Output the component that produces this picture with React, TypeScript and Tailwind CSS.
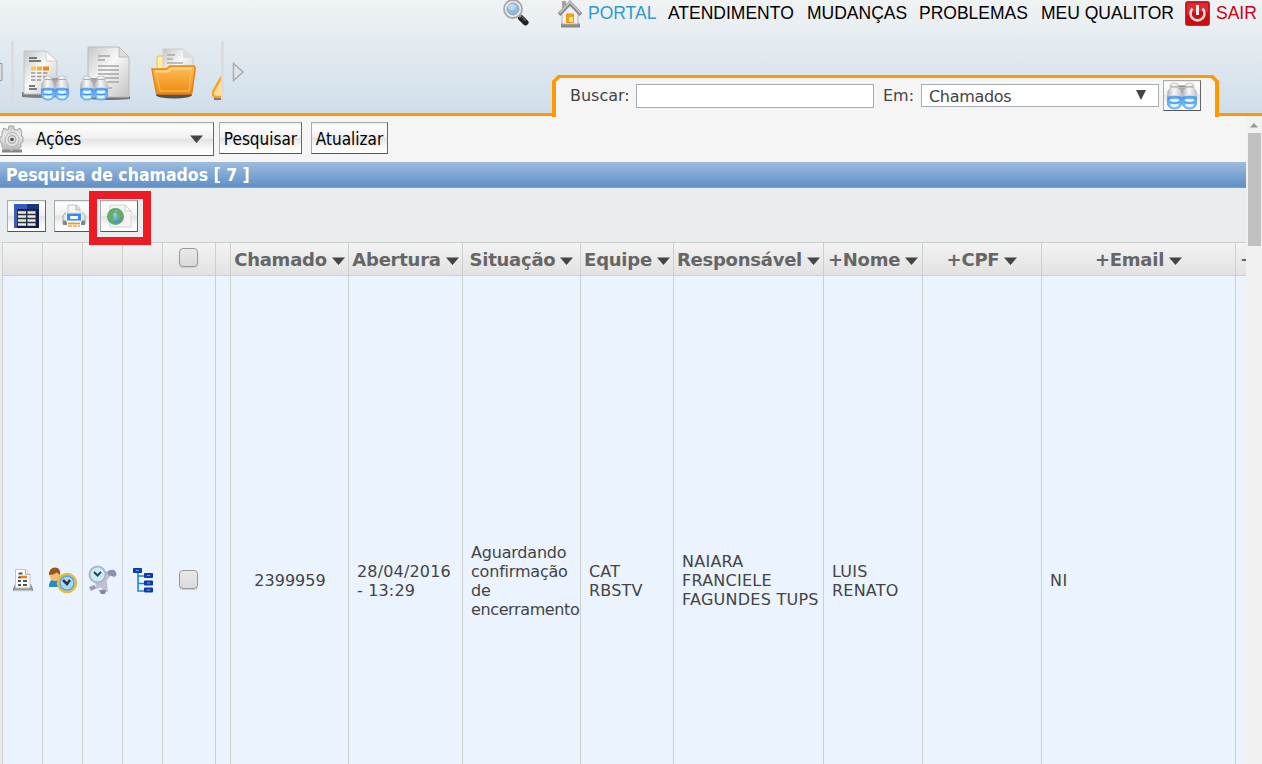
import React from 'react';

const VERDANA = "font-['Verdana','DejaVu_Sans',sans-serif]";
const TAHOMA = "font-['Tahoma','DejaVu_Sans_Condensed','DejaVu_Sans',sans-serif]";
const BUTTON =
  'border border-t-[#aaa] border-l-[#aaa] border-r-[#666] border-b-[#555] bg-[linear-gradient(#cdeefa_0,#fff_2px,#f0f0f0_48%,#e2e2e2_50%,#fafafa_80%,#fff_100%)]';

function Gradients() {
  return (
    <svg width="0" height="0" className="absolute">
      <defs>
        <linearGradient id="paper" x1="0" y1="0" x2="1" y2="1">
          <stop offset="0" stopColor="#c6c6c6" />
          <stop offset=".45" stopColor="#f8f8f8" />
          <stop offset="1" stopColor="#c2c2c2" />
        </linearGradient>
        <linearGradient id="barrel" x1="0" y1="0" x2="1" y2="0">
          <stop offset="0" stopColor="#b4b4b4" />
          <stop offset=".45" stopColor="#f8f8f8" />
          <stop offset="1" stopColor="#c4c4c4" />
        </linearGradient>
        <radialGradient id="lens" cx=".5" cy=".6" r=".6">
          <stop offset="0" stopColor="#d8f1ff" />
          <stop offset=".5" stopColor="#8ecbff" />
          <stop offset="1" stopColor="#3f94f8" />
        </radialGradient>
        <linearGradient id="folder" x1="0" y1="0" x2="0" y2="1">
          <stop offset="0" stopColor="#ffbd55" />
          <stop offset="1" stopColor="#ee8a12" />
        </linearGradient>
        <linearGradient id="metal" x1="0" y1="0" x2="0" y2="1">
          <stop offset="0" stopColor="#c9c9c9" />
          <stop offset=".4" stopColor="#ebebeb" />
          <stop offset="1" stopColor="#b5b5b5" />
        </linearGradient>
        <radialGradient id="globe" cx=".4" cy=".35" r=".7">
          <stop offset="0" stopColor="#9fd6ea" />
          <stop offset="1" stopColor="#2f80c4" />
        </radialGradient>
      </defs>
    </svg>
  );
}

function BinocularShape() {
  return (
    <g>
      <path d="M9 5h10v6H9z" fill="#a9a9a9" />
      <path d="M10 4h8" stroke="#888" strokeWidth="1.500" />
      {[0, 14].map((x) => (
        <g key={x} transform={`translate(${x} 0)`}>
          <path d="M3 3q0-2 4-2t4 2v3q2.500 1 2.500 5v8q-1 6-6.500 6T.5 19v-8q0-4 2.500-5z" fill="url(#barrel)" stroke="#b4b4b4" strokeWidth=".6" />
          <path d="M3.500 4.500h7" stroke="#aaa" />
          <path d="M.3 14q6.500-2 13.400 0v6q-1 5-6.700 5T.3 20z" fill="url(#lens)" stroke="#5ba4f6" strokeWidth=".8" />
          <path d="M2 19q5 1.500 10 0" fill="none" stroke="#3d93f5" strokeWidth="1.300" />
          <path d="M3 16.500q4 1 8 0M3.500 21.500q3.500 1.300 7 0" fill="none" stroke="#eefaff" strokeWidth="2" />
        </g>
      ))}
    </g>
  );
}

function ReportSearch() {
  return (
    <svg width="48" height="54" viewBox="0 0 48 54" className="block shrink-0">
      <path d="M0 44h37v5q-18 2-37 0z" fill="#555" opacity=".7" />
      <path d="M2 3h22l11 10v33H2z" fill="url(#paper)" stroke="#c4c4c4" />
      <path d="M24 3l11 10H24z" fill="#fcfcfc" stroke="#ccc" />
      <path d="M7 10h8M7 13h12M7 38h6M7 41h8" stroke="#555" strokeWidth="1.500" />
      <path d="M9 20.500h5" stroke="#ffc44a" strokeWidth="4" />
      <path d="M15 20.500h5" stroke="#ffae2a" strokeWidth="4" />
      <path d="M21 20.500h6" stroke="#f7841b" strokeWidth="4" />
      <path d="M9 25h18M9 28.500h18M9 32h10" stroke="#999" strokeWidth="1.500" strokeDasharray="4.500 1.500" />
      <g transform="translate(19 27)"><BinocularShape /></g>
    </svg>
  );
}

function DocumentSearch() {
  return (
    <svg width="51" height="56" viewBox="0 0 51 56" className="block shrink-0">
      <path d="M8 50h42v3q-20 2-42 0z" fill="#444" opacity=".7" />
      <path d="M8 1h31l10 10v40H8z" fill="url(#paper)" stroke="#bbb" />
      <path d="M39 1v10h10z" fill="#ddd" stroke="#bbb" />
      <path d="M18 10h12M18 14h7M18 20h21M18 24h21M18 28h21M22 32h17M27 36h12M28 42h4" stroke="#a5a5a5" strokeWidth="1.300" />
      <g transform="translate(0 29)"><BinocularShape /></g>
    </svg>
  );
}

function FolderIcon() {
  return (
    <svg width="46" height="52" viewBox="0 0 46 52" className="block shrink-0">
      <ellipse cx="23" cy="47" rx="18" ry="3.500" fill="#222" opacity=".75" />
      <path d="M6 10q0-2 2-2h7v34H6z" fill="#fff0a0" stroke="#f6b848" />
      <path d="M12 1h20l10 9v27H12z" fill="url(#paper)" stroke="#ccc" />
      <path d="M32 1v9h10z" fill="#ddd" />
      <path d="M16 7h8M16 11h6M16 15h16" stroke="#aaa" strokeWidth="1.300" />
      <path d="M1 21h14l4-3h23q3 0 2 4l-3 22q0 2-3 2H8q-3 0-3-3z" fill="url(#folder)" stroke="#e58411" strokeWidth="1.400" />
      <path d="M4 23.500h13l4-3h20" fill="none" stroke="#ffd98b" strokeWidth="2" />
      <path d="M6 27l3 16h29l2-20" fill="none" stroke="#ffc05c" strokeWidth="1.200" />
    </svg>
  );
}

function GearIcon() {
  return (
    <svg width="24" height="28" viewBox="0 0 24 28" className="block shrink-0">
      <path d="M2 24.500h20v3H2z" fill="#555" opacity=".7" />
      <path d="M9 1h5v3l3 1 3-2 2 4-1 4 2 1v5l-2 1v4l-3 3-4-1-2 2-4-2-4 1-2-4v-3l-2-1v-5h2L2 7l2-4 4 2z" fill="url(#metal)" stroke="#a5a5a5" />
      <circle cx="12" cy="14.500" r="7" fill="#e3e3e3" stroke="#b4b4b4" />
      <circle cx="12" cy="14.500" r="4" fill="#ddd" stroke="#a5a5a5" />
      <circle cx="12" cy="14.500" r="1.800" fill="#4d4d4d" />
    </svg>
  );
}

function Magnifier() {
  return (
    <svg width="28" height="27" viewBox="0 0 28 27" className="-mt-px block shrink-0">
      <path d="M19 19l4.500 4.500" stroke="#222" strokeWidth="6" strokeLinecap="round" />
      <path d="M16 15l3 3" stroke="#888" strokeWidth="3" />
      <path d="M20 18l4 4" stroke="#666" strokeWidth="1.300" />
      <circle cx="11" cy="10" r="9" fill="#ededed" stroke="#a8a8a8" strokeWidth="1.800" />
      <circle cx="11" cy="10" r="6" fill="#8fbcdc" stroke="#8da6b6" />
      <ellipse cx="10" cy="8" rx="4" ry="3" fill="#bcd9ec" />
    </svg>
  );
}

function HomeIcon() {
  return (
    <svg width="24" height="28" viewBox="0 0 24 28" className="block shrink-0">
      <path d="M3 23.500h19v4H3z" fill="#8a8a8a" />
      <path d="M4 1h4v9H4z" fill="#a5a5a5" />
      <path d="M4 12l8-8 8 9v11H4z" fill="#f0f0f0" stroke="#b4b4b4" />
      <path d="M1 14.500L12 3l11 11.500" fill="none" stroke="#8a8a8a" strokeWidth="4" />
      <path d="M1.500 13L12 2l10.500 11" fill="none" stroke="#c9c9c9" strokeWidth="1.700" />
      <path d="M8.500 14h7v8.500h-7z" fill="#ff9c16" stroke="#f48d12" />
      <path d="M11 17h4v5h-4z" fill="#fff08a" />
    </svg>
  );
}

function PowerIcon() {
  return (
    <svg width="25" height="25" viewBox="0 0 25 25" className="block shrink-0">
      <rect x=".5" y=".5" width="24" height="24" rx="2" fill="#c90d12" stroke="#a83a3a" />
      <path d="M2 2h21v9Q12 9 2 14z" fill="#df3c3e" opacity=".7" />
      <path d="M7.500 7.500a7 7 0 1 0 10 0" fill="none" stroke="#f6dada" strokeWidth="2.600" />
      <path d="M12.500 4v10" stroke="#fbeaea" strokeWidth="3" />
    </svg>
  );
}

function GridIcon() {
  return (
    <svg width="25" height="24" viewBox="0 0 25 24">
      <path d="M0 0h25v24H0z" fill="#101d52" />
      <path d="M0 0h3v24H0z" fill="#3f5dab" />
      <path d="M0 0h25v5H0z" fill="#365cc0" />
      <path d="M13 0h12v5H13z" fill="#1c3682" />
      <path d="M3 6h19v16H3z" fill="#2b3348" />
      {[8.5, 12.5, 16.5, 20.5].map((y) => (
        <path key={y} d={`M4 ${y}h8M13.500 ${y}h8`} stroke="#e6ead6" strokeWidth="2.300" />
      ))}
    </svg>
  );
}

function PrinterIcon() {
  return (
    <svg width="24" height="24" viewBox="0 0 24 24" className="block shrink-0">
      <path d="M6 10V1h9l3 4v5z" fill="#f5f5f5" stroke="#c4c4c4" />
      <path d="M14 1v5h4" fill="#ddd" stroke="#bbb" />
      <path d="M3 9h18l2 3v8H1v-8z" fill="#e5e5e5" stroke="#aaa" />
      <path d="M1 16.500h22V21H1z" fill="#858585" />
      <path d="M5 17h14v6H5z" fill="#fff" />
      <path d="M6 19.500h12" stroke="#f29220" strokeWidth="1.800" />
      <path d="M6 22h12" stroke="#f5a646" strokeWidth="1.300" strokeDasharray="4 1" />
      <rect x="4.500" y="9" width="15" height="8" fill="#318ce9" stroke="#eef8ff" />
      <path d="M8 12h8v3H8z" fill="#eef7ff" />
    </svg>
  );
}

function GlobeIcon() {
  return (
    <svg width="26" height="24" viewBox="0 0 26 24">
      <path d="M4 1h15l6 6v16H4z" fill="#f4f4f4" stroke="#d6d6d6" />
      <path d="M19 1v6h6z" fill="#fff" stroke="#ccc" />
      <circle cx="9.500" cy="12.500" r="7.500" fill="url(#globe)" stroke="#68a568" strokeWidth="2" />
      <path d="M3 10q2-4 6-4l1 2-3 2 1 3-1 2 2 4-3-1-3-4zM12 6l3 1 1 5-3 4-2-2 1-3-2-2z" fill="#64b163" />
    </svg>
  );
}

function SheetIcon() {
  return (
    <svg width="20" height="24" viewBox="0 0 20 24">
      <path d="M2 16L0 21v2h20v-2l-2-5z" fill="#8e8e8e" />
      <path d="M1 22.500h18" stroke="#c4c4c4" strokeWidth="1.500" />
      <path d="M2.500 1.500h10l4.500 5V20H2.500z" fill="#fcfcfc" stroke="#c4c4c4" />
      <path d="M12.500 1.500v5H17" fill="#e5e5e5" stroke="#b4b4b4" />
      <path d="M5.500 5.500h4M5 13h3m2 0h4M5 17h3m2 0h4" stroke="#555" strokeWidth="2" />
      <path d="M6 9h8" stroke="#f27b23" strokeWidth="2.500" />
      <path d="M5 9.500h3" stroke="#555" strokeWidth="1.500" />
    </svg>
  );
}

function UserClock() {
  return (
    <svg width="30" height="28" viewBox="0 0 30 28">
      <path d="M1 21q0-8 6-8 6 1 6 8z" fill="#248bd0" />
      <circle cx="7" cy="9.500" r="5.500" fill="#f5bd77" />
      <path d="M1 9Q1 1.500 7 1.500q6 0 5 7.500L9 6.500Q5 9 1 9z" fill="#94581d" />
      <circle cx="19" cy="17" r="9" fill="#a8d8f5" stroke="#e3bd3c" strokeWidth="2.500" />
      <circle cx="19" cy="17" r="7" fill="none" stroke="#5f9fd6" strokeWidth="1.300" />
      <path d="M15 14l4 4 3-4" fill="none" stroke="#28384c" strokeWidth="2.500" />
    </svg>
  );
}

function RobotClock() {
  return (
    <svg width="29" height="30" viewBox="0 0 29 30">
      <path d="M15 15l6-7M8 21l8-3 1 9" stroke="#c0c0d2" strokeWidth="6" fill="none" />
      <path d="M1 22l5-2 3 3-6 3z" fill="#9c9cb4" />
      <path d="M20 10q-2-5 3-5 5-1 5.500 5l-2 2z" fill="#8f8fb0" />
      <path d="M11 25h7l-1 4h-4z" fill="#8686a2" />
      <circle cx="9.500" cy="9.500" r="8" fill="#c8ecf8" stroke="#aeb6c2" strokeWidth="2" />
      <path d="M6 7l3.500 3.500L13 7" fill="none" stroke="#354457" strokeWidth="2" />
    </svg>
  );
}

function TreeIcon() {
  return (
    <svg width="22" height="27" viewBox="0 0 22 27">
      <path d="M6 4v20h7M6 9h7M6 16.500h7" fill="none" stroke="#2483d5" strokeWidth="1.600" />
      <path d="M1.500 1.500h8v4h-8zM12.500 6.500h8v4h-8zM12.500 14h8v4h-8zM12.500 21h8v4h-8z" fill="#123fae" stroke="#0f3aa4" />
      <path d="M4 3.500h3M15 8.500h3M15 16h3M15 23h3" stroke="#6fa1ef" />
    </svg>
  );
}

function Arrow() {
  return (
    <svg width="13" height="8" viewBox="0 0 13 8" className="mt-[3px] block shrink-0">
      <path d="M0 .5h13L6.500 8z" fill="#444" />
    </svg>
  );
}

function Checkbox() {
  return (
    <span className="mr-[2px] block h-[19px] w-[19px] rounded-[4px] border-[1.5px] border-[#999] bg-gradient-to-b from-[#e9e9e9] to-[#dadada] shadow-[0_1px_1px_#ccc]" />
  );
}

const columns: { title: React.ReactNode; cell: React.ReactNode; align: string }[] = [
  { title: null, cell: <SheetIcon />, align: 'justify-center' },
  { title: null, cell: <UserClock />, align: 'justify-center' },
  { title: null, cell: <RobotClock />, align: 'justify-center' },
  { title: null, cell: <TreeIcon />, align: 'justify-center' },
  { title: <span className="-mt-[3px]"><Checkbox /></span>, cell: <Checkbox />, align: 'justify-center pb-[2px]' },
  { title: null, cell: null, align: '' },
  { title: 'Chamado', cell: '2399959', align: 'justify-center pl-px' },
  { title: 'Abertura', cell: <>28/04/2016<br />- 13:29</>, align: 'pl-2 tracking-[0.16px] pt-[2px]' },
  { title: 'Situação', cell: <>Aguardando<br />confirmação<br />de<br /><span className="tracking-[-0.38px]">encerramento</span></>, align: 'pl-2 tracking-[-0.2px] pt-[1px]' },
  { title: 'Equipe', cell: <>CAT<br />RBSTV</>, align: 'pl-2 tracking-[0.2px] pt-[1px]' },
  { title: 'Responsável', cell: <>NAIARA<br />FRANCIELE<br />FAGUNDES TUPS</>, align: 'pl-2 tracking-[0.25px]' },
  { title: '+Nome', cell: <>LUIS<br />RENATO</>, align: 'pl-2 tracking-[0.2px] pt-[1px]' },
  { title: '+CPF', cell: null, align: 'pl-2' },
  { title: '+Email', cell: 'NI', align: 'pl-2 tracking-[0.6px]' },
];

const GRID =
  'grid w-[1320px] shrink-0 grid-cols-[40px_40px_40px_40px_53px_15px_118px_114px_118px_93px_150px_99px_119px_194px_87px]';

export default function App() {
  return (
    <div className={`flex h-[764px] w-[1262px] flex-col overflow-hidden bg-[#f5f5f5] text-[#444] ${VERDANA}`}>
      <Gradients />
      <header className="flex h-[116px] shrink-0 flex-col border-b-[3px] border-[#ff9900] bg-gradient-to-b from-[#f0f3f4] to-[#d0deea]">
        <nav className="flex h-[41px] shrink-0 items-start pl-[502px] font-['Arial','Liberation_Sans',sans-serif] text-[17.5px] leading-[26px] whitespace-nowrap text-black">
          <Magnifier />
          <span className="ml-[28px]"><HomeIcon /></span>
          <a className="ml-[6px] w-[80px] text-[#3399cc]">PORTAL</a>
          <a className="w-[139px]">ATENDIMENTO</a>
          <a className="w-[112px]">MUDANÇAS</a>
          <a className="w-[122px]">PROBLEMAS</a>
          <a className="w-[144px]">MEU QUALITOR</a>
          <span className="mt-[1px]"><PowerIcon /></span>
          <a className="ml-[6px] text-[#cc0011]">SAIR</a>
        </nav>
        <div className="flex h-[76px] shrink-0 items-start">
          <div className="flex h-[61px] w-[552px]">
            <svg width="3" height="18" className="mt-[22px] shrink-0"><path d="M0 .5h2v17H0" fill="#ddd" stroke="#999" /></svg>
            <span className="ml-[8px] w-[3px] bg-[#dcdcdc]" />
            <div className="mt-[5px] ml-[8px] flex w-[200px] items-start overflow-hidden">
              <span className="mt-[2px]"><ReportSearch /></span>
              <span className="ml-[10px]"><DocumentSearch /></span>
              <span className="mt-[2px] ml-[20px]"><FolderIcon /></span>
              <svg width="30" height="56" viewBox="0 0 30 56" className="ml-[15px] block shrink-0">
                <path d="M2 51h28v3H2z" fill="#777" />
                <path d="M1 46L14 23l12 24q1 4-4 4H5q-5 0-4-5z" fill="#ffdf9a" stroke="#f7a130" strokeWidth="2.500" />
              </svg>
            </div>
            <span className="-ml-[1px] w-[3px] bg-[#dcdcdc]" />
            <svg width="13" height="20" viewBox="0 0 13 20" className="mt-[21px] ml-[8px]">
              <path d="M1.500 1.500v17L11 10z" fill="#e4e4e4" stroke="#aaa" strokeWidth="1.500" />
            </svg>
          </div>
          <div className="mt-[34px] h-[42px] w-[667px] shrink-0 bg-[#ff9900] px-[4px] pt-[3px] [clip-path:polygon(0_6px,6px_0,661px_0,667px_6px,667px_42px,0_42px)]">
            <div className="flex h-[39px] items-start bg-[#f5f5f5] pl-[14px] [clip-path:polygon(0_4px,4px_0,655px_0,659px_4px,659px_39px,0_39px)]">
              <label className="w-[66px] pt-[5px] text-[16px] leading-[26px]">Buscar:</label>
              <input className="mt-[6px] h-[24px] w-[238px] border border-[#a5acb2] bg-white" />
              <label className="w-[47px] pt-[5px] pl-[9px] text-[16px] leading-[26px]">Em:</label>
              <div className="mt-[6px] flex h-[23px] w-[238px] justify-between border border-[#a5acb2] bg-white pr-[11px] pl-[7px] text-[16px] leading-[24px] tracking-[-0.3px]">
                Chamados
                <svg width="12" height="11" className="mt-[5px]"><path d="M1 0h10L6 10z" fill="#444" /></svg>
              </div>
              <button className={`mt-[2px] ml-[4px] flex h-[31px] w-[38px] items-center justify-center ${BUTTON}`}>
                <svg width="30" height="28" viewBox="0 0 28 26"><BinocularShape /></svg>
              </button>
            </div>
          </div>
        </div>
      </header>
      <div className="flex min-h-0 flex-1">
        <main className="flex w-[1246px] shrink-0 flex-col">
          <div className={`flex h-[46px] shrink-0 items-start pt-[6px] text-[17px] text-black ${TAHOMA}`}>
            <div className={`flex h-[34px] w-[214px] items-center border-l-0 ${BUTTON}`}>
              <GearIcon />
              <span className="ml-[12px] flex-1 pt-[2px]">Ações</span>
              <span className="mr-[10px] mb-[4px]"><Arrow /></span>
            </div>
            <button className={`ml-[5px] h-[32px] w-[83px] pt-[3px] ${BUTTON}`}>Pesquisar</button>
            <button className={`ml-[9px] h-[32px] w-[77px] pt-[3px] ${BUTTON}`}>Atualizar</button>
          </div>
          <h1 className={`h-[26px] shrink-0 border-b border-[#999] bg-gradient-to-b from-[#9dbcdf] to-[#6090c6] pl-[6px] text-[17.5px] leading-[26px] font-bold whitespace-pre text-white ${TAHOMA}`}>
            Pesquisa de chamados [ 7 ]
          </h1>
          <div className="relative flex h-[54px] shrink-0 items-start bg-[#e9edee] pt-[12px] pl-[7px]">
            <button className={`flex h-[32px] w-[39px] items-center justify-center ${BUTTON}`}><GridIcon /></button>
            <button className={`ml-[8px] flex h-[32px] w-[39px] items-center justify-center ${BUTTON}`}><PrinterIcon /></button>
            <button className={`ml-[7px] flex h-[32px] w-[38px] items-center justify-center ${BUTTON}`}><GlobeIcon /></button>
            <span className="absolute top-[3px] left-[89px] z-10 h-[54px] w-[62px] border-8 border-[#ed1c24]" />
          </div>
          <div className="flex min-h-0 flex-1 flex-col overflow-hidden bg-[#e9edee] pl-[2px]">
            <div className={`h-[34px] border-y border-[#ccd0cc] bg-gradient-to-b from-[#f3f3f3] to-[#e2e2e2] text-[18px] font-bold text-[#666] ${GRID}`}>
              {columns.map((c, i) => (
                <div key={i} className="flex items-center justify-center gap-[5px] border-l border-[#ccd0cc] tracking-[-0.25px] whitespace-nowrap">
                  {c.title}
                  {typeof c.title === 'string' && <Arrow />}
                </div>
              ))}
              <div className="flex items-center border-l border-[#ccd0cc] pl-[4px]">+</div>
            </div>
            <div className={`h-[608px] bg-[#eaf3fe] text-[16px] leading-[19px] ${GRID}`}>
              {columns.map((c, i) => (
                <div key={i} className={`flex items-center border-l border-[#ccd0cc] whitespace-nowrap ${c.align}`}>
                  <div>{c.cell}</div>
                </div>
              ))}
              <div className="border-l border-[#ccd0cc]" />
            </div>
          </div>
        </main>
        <aside className="flex w-[16px] flex-col items-center bg-[#f1f1f1]">
          <svg width="8" height="5" className="mt-[7px] shrink-0"><path d="M0 4.500L4 0l4 4.500z" fill="#999" /></svg>
          <span className="mt-[5px] h-[113px] w-[13px] bg-[#c1c1c1]" />
        </aside>
      </div>
    </div>
  );
}
